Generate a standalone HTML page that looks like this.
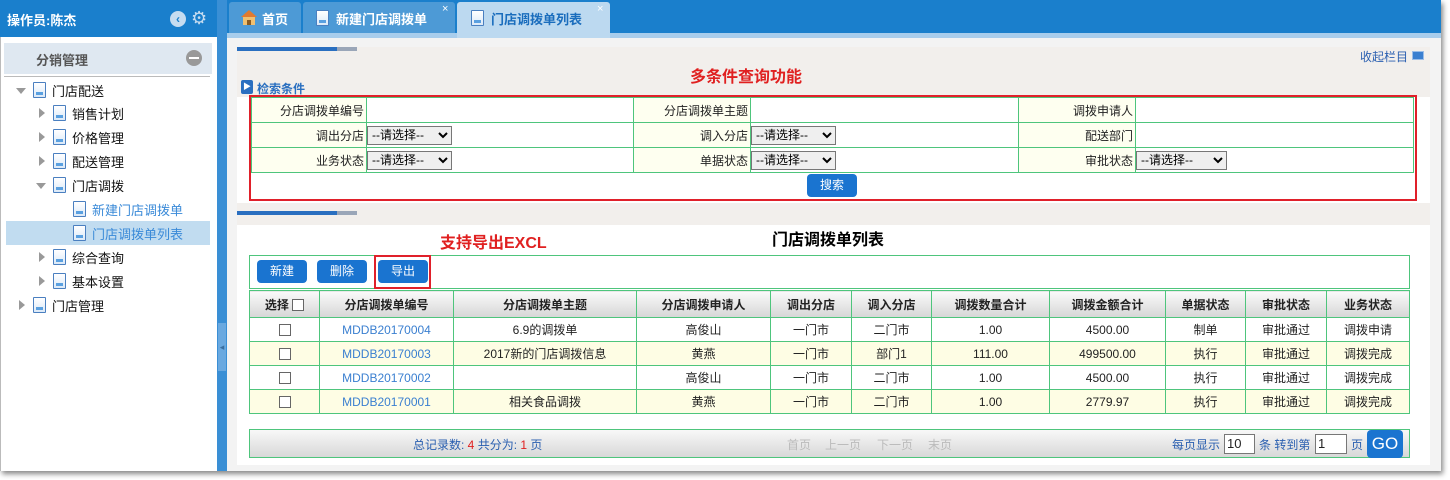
<!DOCTYPE html>
<html><head><meta charset="utf-8"><style>
*{margin:0;padding:0;box-sizing:border-box}
body{width:1450px;height:480px;overflow:hidden;background:#fff;font-family:"Liberation Sans","Noto Sans CJK SC",sans-serif;font-size:12px;color:#222;position:relative}
.a{position:absolute}
.doc{position:absolute;width:13px;height:16px;border:1px solid #4a7fc0;background:linear-gradient(#fff,#dbe9f8);border-radius:1px}
.doc:after{content:"";position:absolute;left:2px;right:2px;bottom:2px;height:3px;background:#5aa0e0}
.tri{position:absolute;width:0;height:0}
.tr{border-left:6px solid #999;border-top:5px solid transparent;border-bottom:5px solid transparent}
.td{border-top:6px solid #999;border-left:5px solid transparent;border-right:5px solid transparent}
.it{position:absolute;font-size:13px;color:#111}
table{border-collapse:collapse;position:absolute}
td,th{border:1px solid #4ec57c;font-size:12px}
.lab{background:#fefff0;text-align:right;padding-right:2px}
select{font-size:12px;height:19px;width:85px;border:1px solid #777;font-family:"Liberation Sans","Noto Sans CJK SC",sans-serif;vertical-align:middle}
.btn{position:absolute;background:#1a74d0;color:#fff;border-radius:4px;text-align:center;font-size:12px;line-height:23px;height:23px;width:50px}
.dt th{background:linear-gradient(#fafafa,#d6d6d6);height:27px;font-weight:bold;font-size:12px;color:#222}
.dt td{height:24px;text-align:center}
.dt tr:nth-child(odd) td{background:#fefde4}
.cb{display:inline-block;width:12px;height:12px;border:1px solid #666;background:#fff;vertical-align:middle}
.lk{color:#3a7fd0}
.pg{position:absolute;top:436px;color:#bbb}
</style></head><body>
<div class="a" style="left:0;top:0;width:1441px;height:471px;background:#f3f3f3;box-shadow:2px 3px 5px #888"></div>
<div class="a" style="left:0;top:0;width:217px;height:471px;background:#fff;border-left:1px solid #bbb"></div>
<div class="a" style="left:0;top:0;width:217px;height:37px;background:#1a7fcc"></div>
<div class="a" style="left:7px;top:10px;color:#fff;font-weight:bold;font-size:13px">操作员:陈杰</div>
<div class="a" style="left:170px;top:11px;width:16px;height:16px;border-radius:50%;background:#c6dcf0;color:#1a7fcc;font-size:12px;font-weight:bold;line-height:16px;text-align:center">‹</div>
<div class="a" style="left:191px;top:9px;color:#c6dcf0;font-size:18px;line-height:18px">⚙</div>
<div class="a" style="left:4px;top:43px;width:208px;height:31px;background:#dfe8f1"></div>
<div class="a" style="left:36px;top:50px;font-size:13px;font-weight:bold;color:#555">分销管理</div>
<div class="a" style="left:186px;top:50px;width:16px;height:16px;border-radius:50%;background:#999"><div style="margin:7px 3px 0;height:2px;background:#fff"></div></div>
<div class="a" style="left:4px;top:76px;width:206px;height:1px;background:#bbb"></div>
<div class="a" style="left:6px;top:221px;width:204px;height:24px;background:#c1dcf0"></div>
<div class="tri td" style="left:16px;top:88px"></div><div class="doc" style="left:33px;top:82px"></div><div class="it" style="left:52px;top:81px">门店配送</div>
<div class="tri tr" style="left:39px;top:108px"></div><div class="doc" style="left:53px;top:105px"></div><div class="it" style="left:72px;top:104px">销售计划</div>
<div class="tri tr" style="left:39px;top:132px"></div><div class="doc" style="left:53px;top:129px"></div><div class="it" style="left:72px;top:128px">价格管理</div>
<div class="tri tr" style="left:39px;top:156px"></div><div class="doc" style="left:53px;top:153px"></div><div class="it" style="left:72px;top:152px">配送管理</div>
<div class="tri td" style="left:36px;top:183px"></div><div class="doc" style="left:53px;top:177px"></div><div class="it" style="left:72px;top:176px">门店调拨</div>
<div class="doc" style="left:73px;top:201px"></div><div class="it" style="left:92px;top:200px;color:#3a8ad8">新建门店调拨单</div>
<div class="doc" style="left:73px;top:225px"></div><div class="it" style="left:92px;top:224px;color:#3a8ad8">门店调拨单列表</div>
<div class="tri tr" style="left:39px;top:252px"></div><div class="doc" style="left:53px;top:249px"></div><div class="it" style="left:72px;top:248px">综合查询</div>
<div class="tri tr" style="left:39px;top:276px"></div><div class="doc" style="left:53px;top:273px"></div><div class="it" style="left:72px;top:272px">基本设置</div>
<div class="tri tr" style="left:19px;top:300px"></div><div class="doc" style="left:33px;top:297px"></div><div class="it" style="left:52px;top:296px">门店管理</div>
<div class="a" style="left:217px;top:0;width:10px;height:471px;background:#3a8fd5"></div>
<div class="a" style="left:218px;top:323px;width:8px;height:48px;background:#6aa9e0;color:#3a6fa0;font-size:9px;line-height:48px;text-align:center">◂</div>
<div class="a" style="left:227px;top:0;width:1214px;height:33px;background:#1a7fcc"></div>
<div class="a" style="left:227px;top:33px;width:1214px;height:5px;background:#a8cdec"></div>
<div class="a" style="left:229px;top:2px;width:72px;height:31px;background:#4d9ad6;border-radius:3px 3px 0 0"></div>
<div class="a" style="left:241px;top:10px;width:0;height:0;border-left:8px solid transparent;border-right:8px solid transparent;border-bottom:7px solid #e07a30"></div>
<div class="a" style="left:243px;top:17px;width:12px;height:8px;background:#f0c070"><div style="margin:3px 4px 0;width:4px;height:5px;background:#8a5a20"></div></div>
<div class="a" style="left:262px;top:9px;color:#fff;font-weight:bold;font-size:13px">首页</div>
<div class="a" style="left:303px;top:2px;width:152px;height:31px;background:#4d9ad6;border-radius:3px 3px 0 0"></div>
<div class="doc" style="left:316px;top:10px"></div>
<div class="a" style="left:336px;top:9px;color:#fff;font-weight:bold;font-size:13px">新建门店调拨单</div>
<div class="a" style="left:442px;top:3px;color:#fff;font-size:11px">×</div>
<div class="a" style="left:457px;top:2px;width:153px;height:36px;background:#bcd9f0;border-radius:3px 3px 0 0"></div>
<div class="doc" style="left:471px;top:10px"></div>
<div class="a" style="left:491px;top:9px;color:#1a6dbd;font-weight:bold;font-size:13px">门店调拨单列表</div>
<div class="a" style="left:597px;top:3px;color:#fff;font-size:11px">×</div>
<div class="a" style="left:237px;top:47px;width:1193px;height:50px;background:#f2efec"></div>
<div class="a" style="left:237px;top:47px;width:100px;height:4px;background:#2a6fc0"></div>
<div class="a" style="left:337px;top:47px;width:20px;height:4px;background:#9aa6b8"></div>
<div class="a" style="left:1360px;top:48px;color:#2a5fb0">收起栏目</div>
<div class="a" style="left:1412px;top:51px;width:12px;height:9px;background:#3a7fd0;border:1px solid #9bbde8"></div>
<div class="a" style="left:690px;top:63px;color:#e02020;font-weight:bold;font-size:16px">多条件查询功能</div>
<div class="a" style="left:241px;top:80px;width:12px;height:14px;background:#2a6fc0;border-radius:2px;color:#fff;font-size:8px;line-height:14px;text-align:center">▶</div>
<div class="a" style="left:257px;top:80px;color:#2a6fc0;font-weight:bold;font-size:12px">检索条件</div>
<div class="a" style="left:237px;top:97px;width:1193px;height:106px;background:#fff"></div>
<table style="left:251px;top:97px;width:1163px">
<tr style="height:25px"><td class="lab" style="width:115px">分店调拨单编号</td><td style="width:267px"></td><td class="lab" style="width:117px">分店调拨单主题</td><td style="width:268px"></td><td class="lab" style="width:117px">调拨申请人</td><td></td></tr>
<tr style="height:25px"><td class="lab">调出分店</td><td><select><option>--请选择--</option></select></td><td class="lab">调入分店</td><td><select><option>--请选择--</option></select></td><td class="lab">配送部门</td><td></td></tr>
<tr style="height:25px"><td class="lab">业务状态</td><td><select><option>--请选择--</option></select></td><td class="lab">单据状态</td><td><select><option>--请选择--</option></select></td><td class="lab">审批状态</td><td><select style="width:91px"><option>--请选择--</option></select></td></tr>
<tr style="height:27px"><td colspan="6" style="border:none"></td></tr>
</table>
<div class="a" style="left:249px;top:95px;width:1168px;height:106px;border:2px solid #e0202a"></div>
<div class="btn" style="left:807px;top:174px">搜索</div>
<div class="a" style="left:237px;top:203px;width:1193px;height:22px;background:#f2efec"></div>
<div class="a" style="left:237px;top:211px;width:100px;height:4px;background:#2a6fc0"></div>
<div class="a" style="left:337px;top:211px;width:20px;height:4px;background:#9aa6b8"></div>
<div class="a" style="left:237px;top:225px;width:1193px;height:240px;background:#fff"></div>
<div class="a" style="left:440px;top:229px;color:#e02020;font-weight:bold;font-size:16px">支持导出EXCL</div>
<div class="a" style="left:772px;top:226px;color:#000;font-weight:bold;font-size:16px">门店调拨单列表</div>
<div class="a" style="left:249px;top:255px;width:1161px;height:34px;border:1px solid #4ec57c"></div>
<div class="btn" style="left:257px;top:260px">新建</div>
<div class="btn" style="left:317px;top:260px">删除</div>
<div class="btn" style="left:378px;top:260px">导出</div>
<div class="a" style="left:374px;top:255px;width:57px;height:34px;border:2px solid #e0202a"></div>
<table class="dt" style="left:249px;top:290px;width:1161px">
<tr><th style="width:70px">选择 <span class="cb"></span></th><th style="width:134px">分店调拨单编号</th><th style="width:183px">分店调拨单主题</th><th style="width:134px">分店调拨申请人</th><th style="width:81px">调出分店</th><th style="width:80px">调入分店</th><th style="width:118px">调拨数量合计</th><th style="width:116px">调拨金额合计</th><th style="width:80px">单据状态</th><th style="width:81px">审批状态</th><th>业务状态</th></tr>
<tr><td><span class="cb"></span></td><td class="lk">MDDB20170004</td><td>6.9的调拨单</td><td>高俊山</td><td>一门市</td><td>二门市</td><td>1.00</td><td>4500.00</td><td>制单</td><td>审批通过</td><td>调拨申请</td></tr>
<tr><td><span class="cb"></span></td><td class="lk">MDDB20170003</td><td>2017新的门店调拨信息</td><td>黄燕</td><td>一门市</td><td>部门1</td><td>111.00</td><td>499500.00</td><td>执行</td><td>审批通过</td><td>调拨完成</td></tr>
<tr><td><span class="cb"></span></td><td class="lk">MDDB20170002</td><td></td><td>高俊山</td><td>一门市</td><td>二门市</td><td>1.00</td><td>4500.00</td><td>执行</td><td>审批通过</td><td>调拨完成</td></tr>
<tr><td><span class="cb"></span></td><td class="lk">MDDB20170001</td><td>相关食品调拨</td><td>黄燕</td><td>一门市</td><td>二门市</td><td>1.00</td><td>2779.97</td><td>执行</td><td>审批通过</td><td>调拨完成</td></tr>
</table>
<div class="a" style="left:249px;top:429px;width:1161px;height:29px;border:1px solid #4ec57c;background:linear-gradient(#f8f8f8,#d8d8d8)"></div>
<div class="a" style="left:413px;top:436px;color:#2a5fb0">总记录数: <span style="color:#e02020">4</span> 共分为: <span style="color:#e02020">1</span> 页</div>
<div class="pg" style="left:787px">首页</div>
<div class="pg" style="left:825px">上一页</div>
<div class="pg" style="left:877px">下一页</div>
<div class="pg" style="left:928px">末页</div>
<div class="a" style="left:1172px;top:436px;color:#2a5fb0">每页显示</div>
<div class="a" style="left:1224px;top:434px;width:31px;height:20px;border:1px solid #777;background:#fff;padding-left:2px;line-height:18px;font-size:13px">10</div>
<div class="a" style="left:1259px;top:436px;color:#2a5fb0">条 转到第</div>
<div class="a" style="left:1315px;top:434px;width:32px;height:20px;border:1px solid #777;background:#fff;padding-left:2px;line-height:18px;font-size:13px">1</div>
<div class="a" style="left:1351px;top:436px;color:#2a5fb0">页</div>
<div class="a" style="left:1367px;top:430px;width:36px;height:28px;background:#1a74d0;border-radius:4px;color:#fff;font-size:17px;line-height:28px;text-align:center">GO</div>
</body></html>
